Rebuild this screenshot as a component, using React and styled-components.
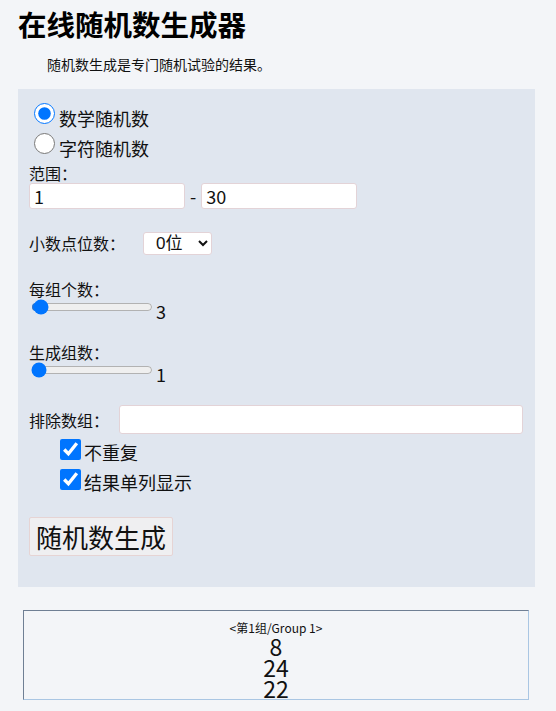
import React from 'react';
import styled, {createGlobalStyle} from 'styled-components';

const GlobalStyle = createGlobalStyle`
  html, body {
    margin: 0;
    padding: 0;
    background: #f3f5f8;
  }
  body {
    font-family: "Noto Sans CJK SC", "Noto Sans", sans-serif;
    color: #111;
  }
`;

const Page = styled.div`
  padding: 0 21px 12px 18px;
`;

const Title = styled.h1`
  margin: 6px 0 0;
  font-size: 28.5px;
  line-height: 36px;
  font-weight: 700;
  color: #000;
`;

const Intro = styled.p`
  margin: 12px 0 0 29px;
  font-size: 14px;
  line-height: 20px;
`;

const Panel = styled.div`
  margin-top: 15px;
  background: #e0e6ef;
  padding: 11px 12px 31px 11px;
`;

const RadioRow = styled.label`
  display: flex;
  height: 30px;
  font-size: 18px;
  line-height: 24px;
  input {
    width: 21px;
    height: 21px;
    margin: 3px 4px 0 5px;
    align-self: flex-start;
    accent-color: #0075ff;
  }
  span {
    align-self: flex-end;
  }
`;

const Label = styled.div`
  font-size: 16px;
  line-height: 20px;
  margin-top: ${({gap}) => gap || 0}px;
`;

const RangeRow = styled.div`
  display: flex;
  align-items: center;
  gap: 5px;
  font-size: 18px;
`;

const TextInput = styled.input`
  box-sizing: border-box;
  width: ${({w}) => w || 156}px;
  height: ${({h}) => h || 26}px;
  border: 1px solid #e3d3d7;
  border-radius: 3px;
  background: #fff;
  padding: 0 4px;
  font-family: inherit;
  font-size: 18px;
  color: #111;
  outline: none;
  flex: ${({grow}) => grow ? 1 : 'none'};
`;

const InlineRow = styled.div`
  display: flex;
  align-items: center;
  margin-top: ${({gap}) => gap || 0}px;
  font-size: 16px;
`;

const Select = styled.select`
  box-sizing: border-box;
  margin-left: 18px;
  height: 23px;
  width: 69px;
  border: 1px solid #e3d3d7;
  border-radius: 3px;
  background: #fff;
  font-family: "Liberation Sans", "Noto Sans CJK SC", sans-serif;
  font-size: 17px;
  padding: 0 0 0 8px;
  color: #111;
`;

const SliderRow = styled.div`
  display: flex;
  align-items: center;
  height: 16px;
  font-size: 18px;
  input {
    width: 122px;
    margin: 0 3px 0 2px;
    accent-color: #0075ff;
  }
  span {
    margin-top: 8px;
  }
`;

const CheckRow = styled.label`
  display: flex;
  align-items: flex-end;
  height: 30px;
  margin-left: 31px;
  font-size: 18px;
  line-height: 24px;
  input {
    width: 21px;
    height: 21px;
    margin: 0 3px 4px 0;
    accent-color: #0075ff;
  }
`;

const Button = styled.button`
  margin-top: 23px;
  height: 39px;
  padding: 0 6px;
  border: 1px solid #e6d4d4;
  border-radius: 2px;
  background: #efeff1;
  font-family: inherit;
  font-size: 26px;
  color: #111;
  cursor: pointer;
`;

const Result = styled.div`
  box-sizing: border-box;
  margin: 23px 6px 0 5px;
  height: 90px;
  padding-top: 8px;
  border: 1px solid;
  border-color: #6f7f94 #a9c6e3 #a9c6e3 #6f7f94;
  text-align: center;
`;

const GroupTitle = styled.div`
  font-size: 12px;
  line-height: 17px;
`;

const Num = styled.div`
  font-size: 23px;
  line-height: 21px;
`;

export default function App() {
    const numbers = [8, 24, 22];
    return (
        <Page>
            <GlobalStyle/>
            <Title>在线随机数生成器</Title>
            <Intro>随机数生成是专门随机试验的结果。</Intro>
            <Panel>
                <RadioRow>
                    <input type="radio" name="kind" defaultChecked/>
                    <span>数学随机数</span>
                </RadioRow>
                <RadioRow>
                    <input type="radio" name="kind"/>
                    <span>字符随机数</span>
                </RadioRow>
                <Label gap={3}>范围：</Label>
                <RangeRow>
                    <TextInput defaultValue="1"/>
                    -
                    <TextInput defaultValue="30"/>
                </RangeRow>
                <InlineRow gap={22}>
                    小数点位数：
                    <Select defaultValue="0">
                        <option value="0">0位</option>
                        <option value="1">1位</option>
                        <option value="2">2位</option>
                    </Select>
                </InlineRow>
                <Label gap={24}>每组个数：</Label>
                <SliderRow>
                    <input type="range" min="1" max="100" defaultValue="3"/>
                    <span>3</span>
                </SliderRow>
                <Label gap={27}>生成组数：</Label>
                <SliderRow>
                    <input type="range" min="1" max="100" defaultValue="1"/>
                    <span>1</span>
                </SliderRow>
                <InlineRow gap={27}>
                    排除数组：
                    <TextInput h={29} grow style={{marginLeft: 10}}/>
                </InlineRow>
                <CheckRow>
                    <input type="checkbox" defaultChecked/>
                    不重复
                </CheckRow>
                <CheckRow>
                    <input type="checkbox" defaultChecked/>
                    结果单列显示
                </CheckRow>
                <Button>随机数生成</Button>
            </Panel>
            <Result>
                <GroupTitle>&lt;第1组/Group 1&gt;</GroupTitle>
                {numbers.map((n) => <Num key={n}>{n}</Num>)}
            </Result>
        </Page>
    );
}
